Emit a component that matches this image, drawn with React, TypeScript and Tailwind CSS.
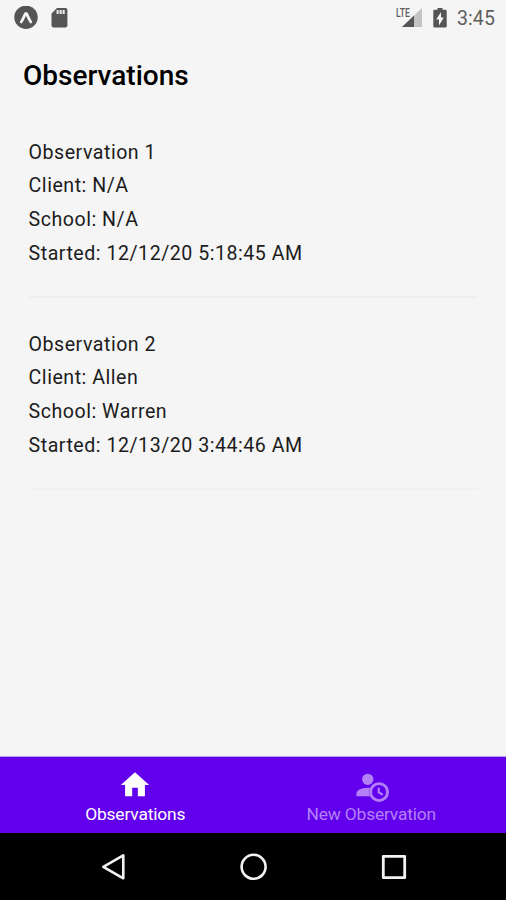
const observations = [
  { title: "Observation 1", client: "N/A", school: "N/A", started: "12/12/20 5:18:45 AM" },
  { title: "Observation 2", client: "Allen", school: "Warren", started: "12/13/20 3:44:46 AM" },
];

export default function App() {
  return (
    <div className="flex h-[900px] w-[506px] flex-col overflow-hidden bg-[#f5f5f5] font-['Roboto',sans-serif]">
      <StatusBar />
      <main className="flex-1">
        <h1 className="mt-5 pl-[23px] text-[28px] leading-10 font-medium text-black">
          Observations
        </h1>
        <div className="mt-[39.5px] mr-7 ml-[28.6px]">
          {observations.map((item) => (
            <ObservationItem key={item.title} item={item} />
          ))}
        </div>
      </main>
      <TabBar />
      <SystemNav />
    </div>
  );
}

function StatusBar() {
  return (
    <header className="flex h-9 shrink-0 items-center pr-[11px] pl-3.5 text-[#5e5e5e]">
      <svg className="h-6 w-6" viewBox="0 0 24 24">
        <circle cx="12" cy="11.3" r="11.7" fill="#555" />
        <path
          d="M7.2 16C9.2 13.2 10 10.4 11.4 7.6h1.2c1.4 2.8 2.2 5.6 4.2 8.4"
          fill="none"
          stroke="#f5f5f5"
          strokeWidth="2.7"
          strokeLinecap="round"
          strokeLinejoin="round"
        />
      </svg>
      <svg className="ml-[13px] h-5 w-[17px]" viewBox="0 0 17 20">
        <path
          d="M6 0h8.6A1.8 1.8 0 0 1 16.4 1.8v15.8a1.8 1.8 0 0 1-1.8 1.8H2.3A1.8 1.8 0 0 1 .5 17.6V5.5z"
          fill="#555"
        />
        <path d="M5.6 2h2.1v4H5.6zM8.6 2h2.1v4H8.6zM11.6 2h2.1v4h-2.1z" fill="#ededed" />
      </svg>

      <div className="ml-auto flex items-center">
        <div className="relative h-5 w-[26px]">
          <span className="absolute top-0 left-0 origin-left scale-x-[.7] text-[12.4px] leading-[10px] font-medium">
            LTE
          </span>
          <svg className="absolute top-0 right-0 h-5 w-5" viewBox="0 0 20 20">
            <path d="M20 0v19H0z" fill="#c3c3c3" />
            <path d="M12 7.6V19H0z" fill="#555" />
          </svg>
        </div>
        <svg className="ml-[11px] h-5 w-[14px]" viewBox="0 0 14 20">
          <path
            d="M4.5 0h5v1.8h3a1.2 1.2 0 0 1 1.2 1.2v15.3a1.2 1.2 0 0 1-1.2 1.2h-11A1.2 1.2 0 0 1 .3 18.3V3a1.2 1.2 0 0 1 1.2-1.2h3z"
            fill="#555"
          />
          <path d="M8 4v5.6h2.8L6 17.4v-5.9H3.2z" fill="#f5f5f5" />
        </svg>
        <span className="mt-px ml-[10px] text-[19.5px] leading-6 tracking-[.1px]">3:45</span>
      </div>
    </header>
  );
}

function ObservationItem({ item }: { item: (typeof observations)[0] }) {
  return (
    <div className="mb-[29.5px] border-b-2 border-[#eeeeee] pb-[25.5px] text-[19.6px] leading-[33.75px] tracking-[.51px] text-[#1c1c1c] last:border-[#f1f1f1]">
      <p>{item.title}</p>
      <p>Client: {item.client}</p>
      <p>School: {item.school}</p>
      <p>Started: {item.started}</p>
    </div>
  );
}

function TabBar() {
  return (
    <nav className="flex h-[77px] shrink-0 border-t border-[#b9a2ee] bg-[#6200ee] pr-[16.8px] pl-[17.2px]">
      <a className="flex flex-1 flex-col items-center pt-[11px] text-white">
        <svg className="h-[34px] w-[34px]" viewBox="0 0 24 24" fill="currentColor">
          <path d="M10 20v-6h4v6h5v-8h3L12 3 2 12h3v8z" />
        </svg>
        <span className="text-[17.4px] leading-6 tracking-[-.18px]">Observations</span>
      </a>
      <a className="flex flex-1 flex-col items-center pt-[11px] text-[#b480f6]">
        <svg className="ml-px h-[34px] w-[34px]" viewBox="0 0 24 24" fill="currentColor">
          <circle cx="9" cy="8" r="4" />
          <path d="M10.63 14.1A7 7 0 0 0 10.67 20H1v-2c.06-1.14.84-2.07 2.34-2.82S6.72 14.04 9 14c.57 0 1.11.05 1.63.1z" />
          <circle cx="17" cy="17" r="6" fill="none" stroke="currentColor" strokeWidth="2" />
          <path d="M16 14h1.5v2.82l2.44 1.41-.75 1.3L16 17.69z" />
        </svg>
        <span className="text-[17.4px] leading-6 tracking-[-.18px]">New Observation</span>
      </a>
    </nav>
  );
}

function SystemNav() {
  return (
    <footer className="flex h-[67px] shrink-0 items-center justify-between bg-black pr-[98px] pl-[100px]">
      <svg className="h-7 w-7" viewBox="0 0 28 28" fill="none" stroke="#f2f2f2" strokeWidth="2.6" strokeLinejoin="round">
        <path d="M23.3 2.3v23L3.3 13.8z" />
      </svg>
      <svg className="h-7 w-7" viewBox="0 0 28 28" fill="none" stroke="#f2f2f2" strokeWidth="2.6">
        <circle cx="13.6" cy="13.8" r="12" />
      </svg>
      <svg className="h-7 w-7" viewBox="0 0 28 28" fill="none" stroke="#f2f2f2" strokeWidth="2.8" strokeLinejoin="round">
        <rect x="3.3" y="3.3" width="21.4" height="21.4" />
      </svg>
    </footer>
  );
}
